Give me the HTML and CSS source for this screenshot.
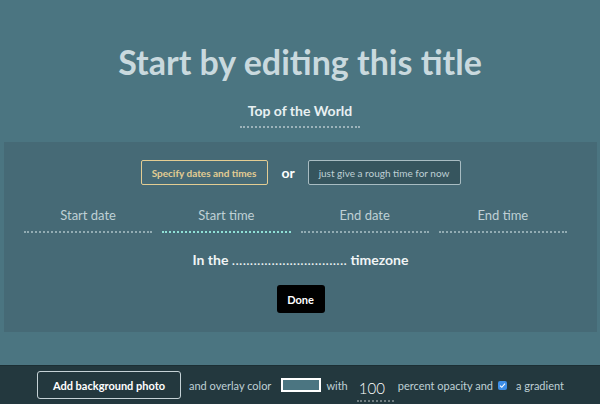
FILE: index.html
```html
<!DOCTYPE html>
<html lang="en">

<head>
  <meta charset="UTF-8">
  <meta name="viewport" content="width=device-width, initial-scale=1.0">
  <title>Event Countdown</title>
  <link rel="stylesheet" href="styles.css">
</head>

<body>
  <header class="hero">
    <h1 class="title">Start by editing this title</h1>
    <div class="subtitle">Top of the World</div>
  </header>

  <section class="panel">
    <div class="choice">
      <button class="choice-btn selected">Specify dates and times</button>
      <span class="or">or</span>
      <button class="choice-btn rough">just give a rough time for now</button>
    </div>
    <div class="fields">
      <div class="field">Start date</div>
      <div class="field focused">Start time</div>
      <div class="field">End date</div>
      <div class="field">End time</div>
    </div>
    <div class="timezone">In the <span class="tz-blank">................................</span> timezone</div>
    <button class="done">Done</button>
  </section>

  <footer class="toolbar">
    <button class="photo-btn">Add background photo</button>
    <span>and overlay color</span>
    <span class="swatch"></span>
    <span>with</span>
    <span class="opacity">100</span>
    <span>percent opacity and</span>
    <span class="check">
      <svg width="9" height="9" viewBox="0 0 9 9">
        <path d="M2 4.6 L3.8 6.3 L7 2.6" fill="none" stroke="#fff" stroke-width="1.1" />
      </svg>
    </span>
    <span>a gradient</span>
  </footer>
</body>

</html>
```

FILE: styles.css
```css
*,
*::before,
*::after {
  box-sizing: border-box;
}

:root {
  --bg: #4b7581;
  --panel: #466a76;
  --bar: #23383e;
  --light: #c9d9de;
  --muted: #bfd0d5;
  --gold: #e3cd93;
  --teal: #8fe0d6;
}

html,
body {
  margin: 0;
  padding: 0;
  height: 100%;
}

body {
  background: var(--bg);
  font-family: 'Lato', sans-serif;
  color: #fff;
  display: flex;
  flex-direction: column;
}

button {
  font-family: inherit;
  cursor: pointer;
}

.hero {
  text-align: center;
  padding-top: 40px;
  height: 142px;
}

.title {
  margin: 0;
  font-size: 34px;
  font-weight: 700;
  color: var(--light);
  line-height: 44px;
}

.subtitle {
  display: inline-block;
  margin-top: 18px;
  padding: 0 8px 7px;
  font-size: 14px;
  font-weight: 700;
  color: #e8f0f2;
  border-bottom: 2px dotted rgba(255, 255, 255, 0.45);
}

.panel {
  margin: 0 3px 0 4px;
  height: 190px;
  background: var(--panel);
  display: flex;
  flex-direction: column;
  align-items: center;
  padding-top: 18px;
}

.choice {
  display: flex;
  align-items: center;
  gap: 14px;
}

.choice-btn {
  height: 25px;
  padding: 0;
  font-size: 10px;
  font-weight: 700;
  white-space: nowrap;
  border-radius: 2px;
  background: transparent;
}

.choice-btn.selected {
  color: var(--gold);
  border: 1.5px solid var(--gold);
  width: 127px;
}

.choice-btn.rough {
  color: var(--muted);
  font-weight: 400;
  background: #36555e;
  border: 1.5px solid #a8bcc2;
  width: 153px;
}

.or {
  font-size: 14px;
  font-weight: 700;
  width: 12px;
}

.fields {
  display: flex;
  gap: 10px;
  margin: 22px 10px 0 0;
  width: 543px;
}

.field {
  flex: 1;
  text-align: center;
  font-size: 13px;
  color: var(--muted);
  padding-bottom: 8px;
  border-bottom: 2px dotted rgba(210, 225, 230, 0.55);
}

.field.focused {
  border-bottom-color: var(--teal);
}

.timezone {
  margin-top: 18px;
  font-size: 14px;
  font-weight: 700;
  color: #f0f4f5;
}

.tz-blank {
  font-weight: 400;
  letter-spacing: 0.3px;
}

.done {
  margin-top: 17px;
  width: 48px;
  height: 28px;
  background: #000;
  color: #fff;
  border: none;
  border-radius: 3px;
  font-size: 11px;
  font-weight: 700;
}

.toolbar {
  margin-top: auto;
  height: 39px;
  background: var(--bar);
  border-top: 1px solid #1c2f34;
  display: flex;
  align-items: center;
  padding-left: 37px;
  gap: 4px;
  font-size: 11px;
  color: var(--muted);
}

.photo-btn {
  height: 28px;
  width: 144px;
  margin-right: 4px;
  background: transparent;
  border: 1.5px solid #c5d2d6;
  border-radius: 3px;
  color: #fff;
  font-size: 11px;
  font-weight: 700;
}

.swatch {
  width: 40px;
  height: 14px;
  margin: 0 1px 0 6px;
  background: var(--bg);
  border: 2px solid #fff;
}

.opacity {
  width: 37px;
  margin: 0 0 2px 5px;
  padding: 0 2px 3px;
  font-size: 15px;
  font-weight: 300;
  color: #fff;
  border-bottom: 2px dotted rgba(255, 255, 255, 0.35);
  align-self: flex-end;
}

.check {
  width: 9px;
  height: 9px;
  background: #3d8ee8;
  border-radius: 2px;
  display: flex;
  margin: 0 5px 0 1px;
}
```
